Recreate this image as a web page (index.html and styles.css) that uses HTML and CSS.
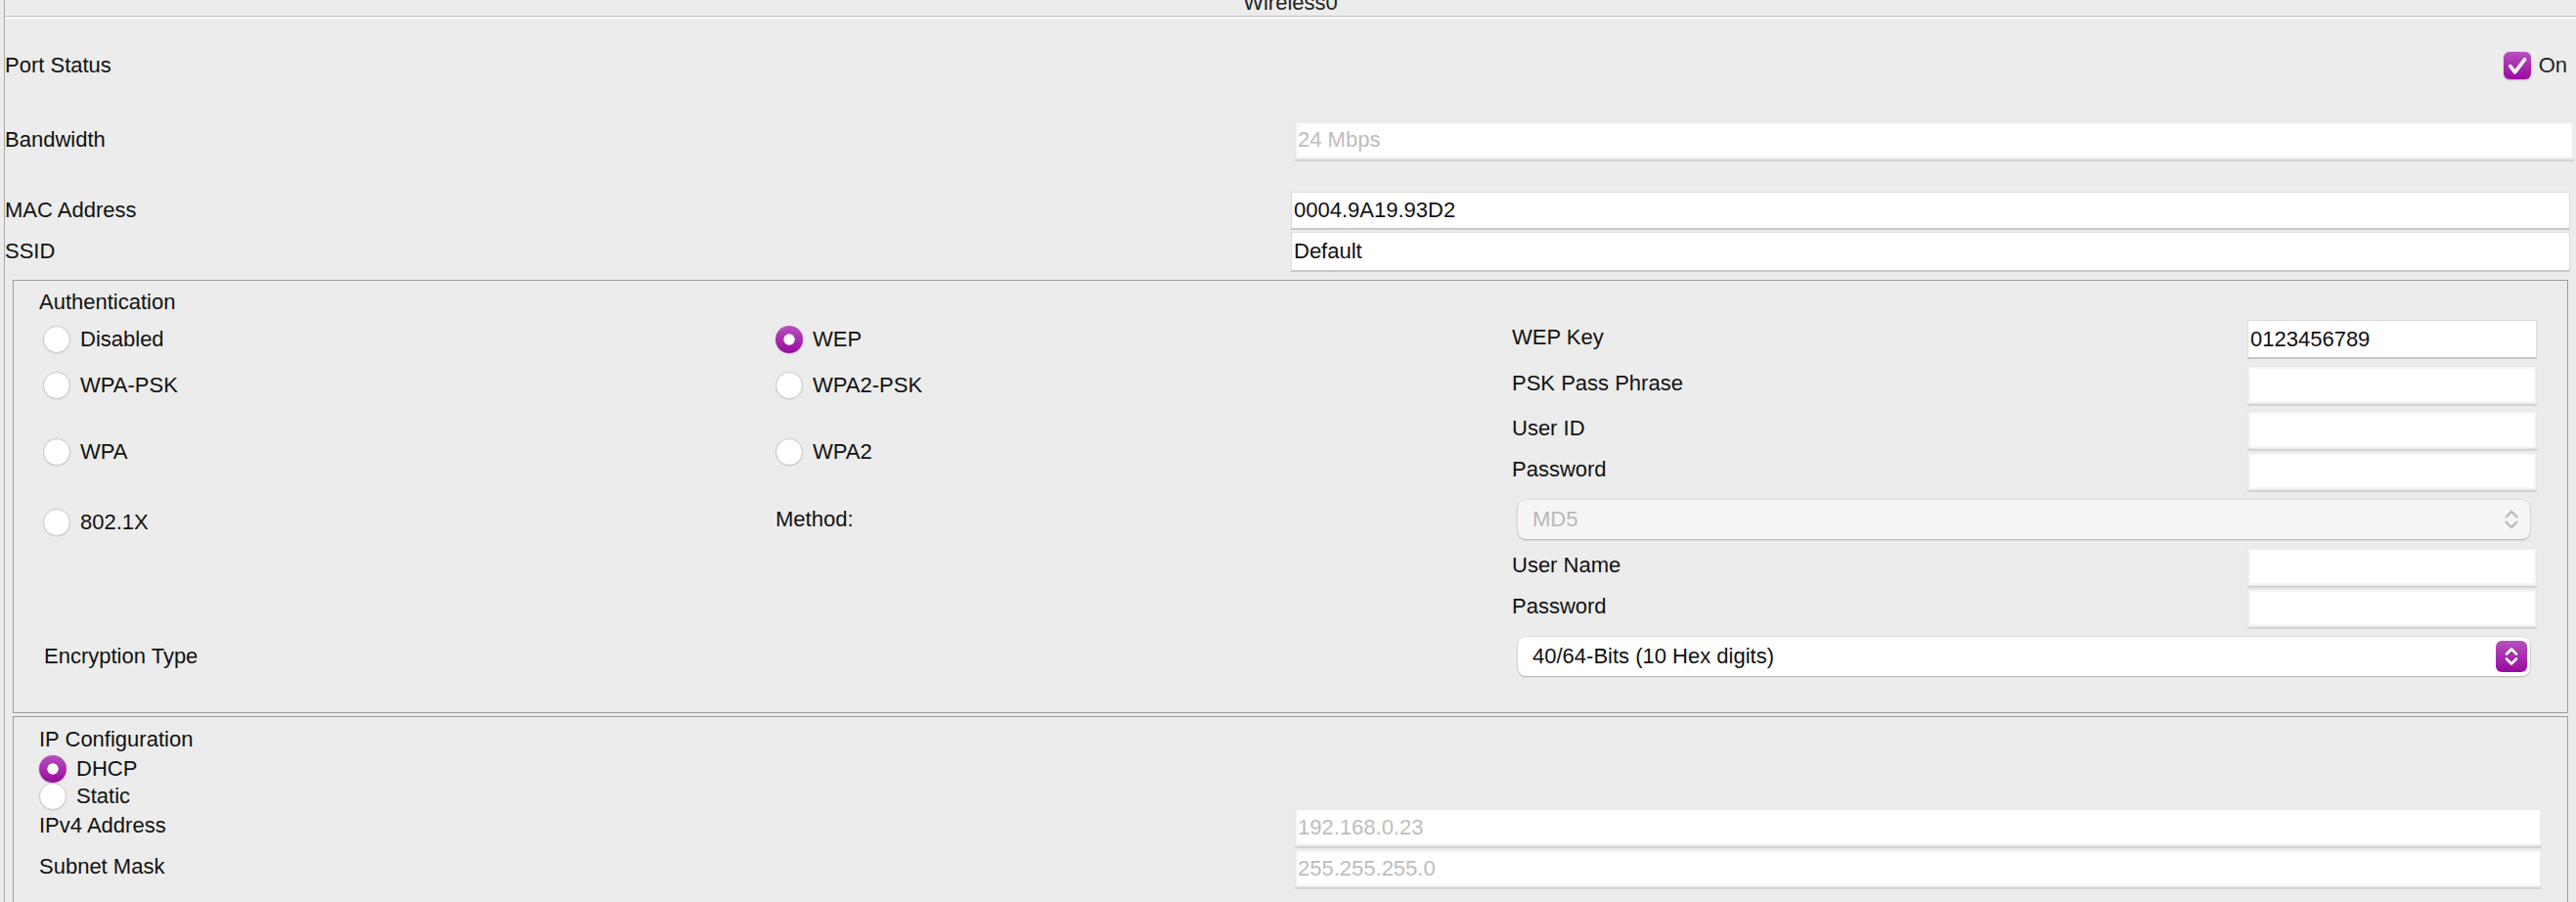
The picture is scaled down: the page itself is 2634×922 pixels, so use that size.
FILE: index.html
```html
<!DOCTYPE html>
<html lang="en">
<head>
<meta charset="utf-8">
<title>Wireless0</title>
<link rel="stylesheet" href="styles.css">
</head>
<body>
<div class="panel">
  <div class="titlebar"><div class="title">Wireless0</div></div>
  <div class="content">
    <div class="row row-status">
      <span class="label">Port Status</span>
      <div class="check">
        <span class="checkbox"><svg width="28" height="28" viewBox="0 0 28 28"><path d="M6.8 14.6 L11.6 20.8 L21.6 7.6" fill="none" stroke="#fff" stroke-width="3.6" stroke-linecap="round" stroke-linejoin="round"/></svg></span>
        <span>On</span>
      </div>
    </div>
    <div class="row row-bandwidth">
      <span class="label">Bandwidth</span>
      <input class="field field-off field-shift" value="24 Mbps" readonly>
    </div>
    <div class="row row-mac">
      <span class="label">MAC Address</span>
      <input class="field field-fill" value="0004.9A19.93D2" readonly>
    </div>
    <div class="row row-ssid">
      <span class="label">SSID</span>
      <input class="field field-fill" value="Default" readonly>
    </div>

    <section class="group auth">
      <div class="group-title">Authentication</div>
      <div class="auth-grid">
        <div class="opt r1 c1"><span class="radio"></span>Disabled</div>
        <div class="opt r1 c2"><span class="radio on"></span>WEP</div>
        <div class="label-r r1 c3">WEP Key</div>
        <input class="field r1 c4" value="0123456789" readonly>

        <div class="opt r2 c1"><span class="radio"></span>WPA-PSK</div>
        <div class="opt r2 c2"><span class="radio"></span>WPA2-PSK</div>
        <div class="label-r r2 c3">PSK Pass Phrase</div>
        <input class="field field-off r2 c4" value="" readonly>

        <div class="opt opt-tall c1"><span class="radio"></span>WPA</div>
        <div class="opt opt-tall c2"><span class="radio"></span>WPA2</div>
        <div class="label-r r3 c3">User ID</div>
        <input class="field field-off r3 c4" value="" readonly>
        <div class="label-r r4 c3">Password</div>
        <input class="field field-off r4 c4" value="" readonly>

        <div class="opt opt-low r5 c1"><span class="radio"></span>802.1X</div>
        <div class="label-m r5 c2">Method:</div>
        <div class="sel sel-off r5">
          <span>MD5</span>
          <svg class="chev" width="16" height="24" viewBox="0 0 16 24"><path d="M2.5 9.5 L8 3.8 L13.5 9.5 M2.5 14.5 L8 20.2 L13.5 14.5" fill="none" stroke="#bcbcbc" stroke-width="2.4" stroke-linecap="round" stroke-linejoin="round"/></svg>
        </div>

        <div class="label-r r6 c3">User Name</div>
        <input class="field field-off r6 c4" value="" readonly>
        <div class="label-r r7 c3">Password</div>
        <input class="field field-off r7 c4" value="" readonly>

        <div class="label-m label-enc r8">Encryption Type</div>
        <div class="sel sel-on r8">
          <span>40/64-Bits (10 Hex digits)</span>
          <span class="stepper"><svg width="14" height="22" viewBox="0 0 14 22"><path d="M2 8.5 L7 3.5 L12 8.5 M2 13.5 L7 18.5 L12 13.5" fill="none" stroke="#fff" stroke-width="2.6" stroke-linecap="round" stroke-linejoin="round"/></svg></span>
        </div>
      </div>
    </section>

    <section class="group ip">
      <div class="group-title">IP Configuration</div>
      <div class="ip-radios">
        <div class="opt opt-small"><span class="radio on"></span>DHCP</div>
        <div class="opt opt-small"><span class="radio"></span>Static</div>
      </div>
      <div class="ip-grid">
        <div class="label-r">IPv4 Address</div>
        <input class="field field-off" value="192.168.0.23" readonly>
        <div class="label-r">Subnet Mask</div>
        <input class="field field-off" value="255.255.255.0" readonly>
      </div>
    </section>
  </div>
</div>
</body>
</html>
```

FILE: styles.css
```css
html, body {
  margin: 0;
  height: 100%;
  overflow: hidden;
}

body {
  background: #ececec;
  font-family: "Liberation Sans", Arial, Helvetica, sans-serif;
  font-size: 22px;
  color: #111;
}

.panel {
  margin-left: 4px;
  border-left: 1px solid #a9a9a9;
  min-height: 100%;
}

.titlebar {
  height: 16px;
  border-bottom: 1px solid #c4c4c4;
  overflow: hidden;
  text-align: center;
  color: #222;
}

.title {
  line-height: 16px;
  margin-top: -5px;
}

.content {
  margin-top: 1px;
  border-top: 1px solid #fff;
}

/* top rows */
.row {
  display: grid;
  grid-template-columns: 1fr 1308px;
  align-items: center;
  padding-right: 6px;
}

.row-status { height: 96px; }
.row-bandwidth { height: 56px; }
.row-mac { margin-top: 25px; height: 38px; }
.row-ssid { margin-top: 3px; height: 40px; }

.field {
  box-sizing: border-box;
  width: 100%;
  height: 39px;
  margin: 0;
  padding: 0 2px;
  font: inherit;
  color: #111;
  background: #fff;
  border: 1px solid #dcdcdc;
  border-bottom-color: #c6c6c6;
  border-radius: 0;
  box-shadow: 0 1px 0 #c8c8c8;
  outline: none;
}

.field-fill { height: 100%; }

.field-off {
  color: #bdbdbd;
  border: 1px solid #e6e6e6;
  box-shadow: inset 0 0 0 2px #f5f5f5, 0 2px 0 #d5d5d5;
}

.field-shift {
  margin-left: 4px;
  margin-right: -4px;
}

.check {
  justify-self: end;
  display: flex;
  align-items: center;
  gap: 8px;
  margin-right: 3px;
  color: #222;
}

.checkbox {
  width: 28px;
  height: 28px;
  border-radius: 6px;
  background: linear-gradient(#b751bf, #980a9e);
  box-shadow: 0 0.5px 1.5px rgba(0, 0, 0, 0.25);
  display: flex;
}

/* group boxes */
.group {
  margin: 0 8px;
  border: 1px solid #9c9c9c;
}

.group-title {
  line-height: 26px;
}

.auth {
  margin-top: 9px;
  padding: 9px 31px 37px 26px;
}

.auth-grid {
  margin: 5px 0 0 4px;
  display: grid;
  grid-template-columns: 749px 753px 752px 296px;
  grid-template-rows: 47px 46px 42px 49px 49px 42px 49px 40px;
  align-items: start;
}

.r1 { grid-row: 1; }
.r2 { grid-row: 2; }
.r3 { grid-row: 3; }
.r4 { grid-row: 4; }
.r5 { grid-row: 5; }
.r6 { grid-row: 6; }
.r7 { grid-row: 7; }
.r8 { grid-row: 8; }
.c1 { grid-column: 1; }
.c2 { grid-column: 2; }
.c3 { grid-column: 3; }
.c4 { grid-column: 4; }

.opt {
  display: flex;
  align-items: center;
  gap: 10px;
  height: 40px;
}

.opt-tall {
  grid-row: 3 / span 2;
  margin-top: 22px;
}

.opt-low { margin-top: 3px; }

.opt-small { height: 28px; }

.radio {
  flex: none;
  box-sizing: border-box;
  width: 28px;
  height: 28px;
  border-radius: 50%;
  background: #fff;
  border: 1px solid #cbcbcb;
  box-shadow: 0 0.5px 1px rgba(0, 0, 0, 0.12);
}

.radio.on {
  border: none;
  background: radial-gradient(circle, #fff 0 5.3px, transparent 6px), linear-gradient(#b751bf, #980a9e);
  box-shadow: 0 0.5px 1.5px rgba(0, 0, 0, 0.25);
}

.label-r { line-height: 36px; }
.label-m { line-height: 40px; }
.label-enc { grid-column: 1 / span 2; padding-left: 1px; }

.sel {
  grid-column: 3 / span 2;
  margin: 0 7px 0 6px;
  height: 40px;
  box-sizing: border-box;
  border-radius: 8px;
  display: flex;
  align-items: center;
  justify-content: space-between;
  padding: 0 11px 0 15px;
  background: #fff;
  box-shadow: 0 0 0 0.5px rgba(0, 0, 0, 0.1), 0 1px 2px rgba(0, 0, 0, 0.22);
}

.sel-off {
  background: #f5f5f5;
  color: #b9b9b9;
}

.sel-on {
  padding-right: 3px;
  color: #111;
}

.stepper {
  width: 32px;
  height: 32px;
  border-radius: 6px;
  background: linear-gradient(#b751bf, #980a9e);
  display: flex;
  align-items: center;
  justify-content: center;
}

.ip {
  margin-top: 3px;
  padding: 10px 26px 30px 26px;
}

.ip-radios { margin-top: 3px; }

.ip-grid {
  margin-top: -2px;
  display: grid;
  grid-template-columns: 1284px 1275px;
  grid-auto-rows: 39px;
  row-gap: 3px;
  align-items: start;
}
```
